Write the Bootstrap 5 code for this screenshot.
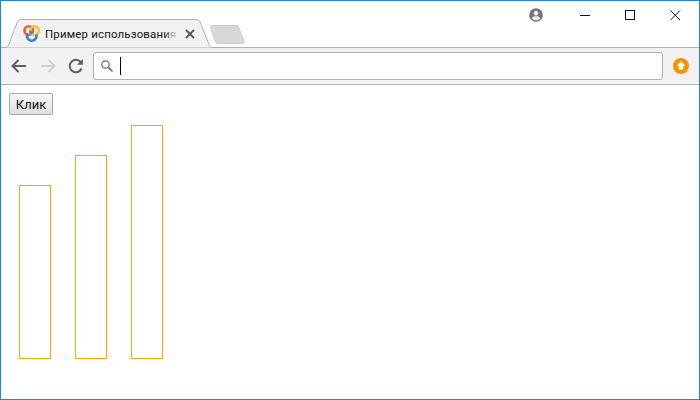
<!DOCTYPE html>
<html lang="ru">
<head>
<meta charset="utf-8">
<title>Пример использования</title>
<link href="https://cdn.jsdelivr.net/npm/bootstrap@5.3.0/dist/css/bootstrap.min.css" rel="stylesheet">
<style>
html, body { margin: 0; height: 100%; background: #fff; overflow: hidden; }
.win-frame { width: 700px; height: 400px; border: 1px solid #1e88dc; background: #fff; font-family: "Roboto", sans-serif; }
.tab-strip { height: 46px; position: relative; }
.tab-shape { position: absolute; left: 0; top: 0; }
.tab-title { position: absolute; left: 44px; top: 25px; font-family: "Roboto", sans-serif; font-size: 11.4px; letter-spacing: .2px; line-height: 16px; color: #111; white-space: nowrap; }
.tab-fade { position: absolute; left: 163px; top: 25px; width: 15px; height: 16px; background: linear-gradient(to right, rgba(242,242,242,0), #f2f2f2 95%); }
.tab-ico { position: absolute; }
.win-ctrl { position: absolute; }
.tool-strip { height: 38px; background: #f2f2f2; border-top: 1px solid #b0b0b0; border-bottom: 1px solid #b4b4b4; padding: 4px 0 0 8px; }
.tool-btn { width: 20px; height: 20px; display: block; flex: none; }
.nav-gap { margin-left: 1px; }
.addr-box { width: 570px; height: 28px; background: #fff; border: 1px solid #b0b0b0; border-radius: 3px; margin-left: 7px; flex: none; padding-left: 6px; }
.addr-caret { width: 1px; height: 18px; background: #000; margin-left: 6px; }
.up-badge { margin: 5px 0 0 9px; }
.page-zone { padding: 8px 0 0 8px; }
.click-btn { width: 44px; height: 22px; padding: 1px 0 0; border: 1px solid #a8a8a8; border-radius: 2px; background: linear-gradient(#f7f7f7, #e0e0e0); color: #111; font-family: "Roboto", sans-serif; font-weight: 400; font-size: 13px; line-height: 19px; display: block; }
.click-btn:hover { background: linear-gradient(#f7f7f7, #e0e0e0); color: #111; border-color: #a8a8a8; }
.bar-row { height: 244px; gap: 24px; padding-left: 10px; }
.bar-item { width: 32px; border: 1px solid #ffa800; background: #fff; }
</style>
</head>
<body>
<div class="win-frame d-flex flex-column">
  <div class="tab-strip">
    <svg class="tab-shape" width="260" height="48" viewBox="0 0 260 48" aria-hidden="true">
      <path d="M-1 46.5H4.500C6 46.500 7 45.500 7.600 44L16 22C16.800 19.500 18 18.500 20 18.500H195C197.500 18.500 198.500 19.500 199.500 22L208 43.500C208.800 45.500 209.500 46.500 212 46.500H260" fill="#f2f2f2" stroke="#b0b0b0" stroke-width="1"/>
      <path d="M209.500 26.500C209.200 25.200 210 24.500 211.500 24.500H235C236.300 24.500 237 25 237.500 26L243 40C243.800 41.500 243 42.500 241.500 42.500H217C215.800 42.500 215 42 214.500 41Z" fill="#d8d8d8" stroke="#cccccc" stroke-width="1"/>
    </svg>
    <svg class="tab-ico" style="left:22px;top:23px" width="18" height="18" viewBox="0 0 18 18" aria-hidden="true">
      <circle cx="5.800" cy="6.500" r="4.300" fill="none" stroke="#ee5a3a" stroke-width="2.600"/>
      <circle cx="11.500" cy="6.500" r="4.300" fill="none" stroke="#fbc02d" stroke-width="2.600"/>
      <path d="M4.300 10.500A4.700 4.700 0 1 0 13.200 10.500" fill="none" stroke="#1e88e5" stroke-width="2.600"/>
      <path d="M6.500 7.200L9.500 9.500" stroke="#1e88e5" stroke-width="2.400"/>
    </svg>
    <div class="tab-title">Пример использования</div>
    <div class="tab-fade"></div>
    <svg class="tab-ico" style="left:184px;top:28px" width="10" height="10" viewBox="0 0 10 10" aria-hidden="true">
      <path d="M1 1L9 9M9 1L1 9" stroke="#555" stroke-width="1.800"/>
    </svg>
    <svg class="win-ctrl" style="left:528px;top:7px" width="14" height="14" viewBox="0 0 14 14" aria-hidden="true">
      <circle cx="7" cy="7" r="6.800" fill="#757575"/>
      <circle cx="7" cy="5.200" r="2.300" fill="#fff"/>
      <path d="M2.800 10.600C3.500 8.900 5.200 8.300 7 8.300S10.500 8.900 11.200 10.600C10.200 11.800 8.700 12.300 7 12.300S3.800 11.800 2.800 10.600Z" fill="#fff"/>
    </svg>
    <svg class="win-ctrl" style="left:579px;top:14px" width="11" height="2" viewBox="0 0 11 2" aria-hidden="true"><path d="M0 .5H10" stroke="#111" stroke-width="1"/></svg>
    <svg class="win-ctrl" style="left:624px;top:9px" width="11" height="11" viewBox="0 0 11 11" aria-hidden="true"><rect x=".5" y=".5" width="9" height="9" fill="none" stroke="#111" stroke-width="1"/></svg>
    <svg class="win-ctrl" style="left:669px;top:9px" width="11" height="11" viewBox="0 0 11 11" aria-hidden="true"><path d="M.5 .5L10 10M10 .5L.5 10" stroke="#111" stroke-width="1"/></svg>
  </div>
  <div class="tool-strip d-flex align-items-start">
    <div class="d-flex align-items-center gap-2" style="height:28px">
      <svg class="tool-btn" viewBox="0 0 20 20" aria-hidden="true"><path d="M17 10H4M9.500 4L3.500 10L9.500 16" fill="none" stroke="#5f5f5f" stroke-width="2"/></svg>
      <svg class="tool-btn nav-gap" viewBox="0 0 20 20" aria-hidden="true"><path d="M3 10H16M10.500 4L16.500 10L10.500 16" fill="none" stroke="#d0d0d0" stroke-width="2"/></svg>
      <svg class="tool-btn" viewBox="0 0 20 20" aria-hidden="true"><path d="M15.600 12.500A6.200 6.200 0 1 1 15 6.400" fill="none" stroke="#5f5f5f" stroke-width="2"/><path d="M16.800 3V8.800H11Z" fill="#5f5f5f"/></svg>
    </div>
    <div class="addr-box d-flex align-items-center">
      <svg width="14" height="14" viewBox="0 0 14 14" aria-hidden="true"><circle cx="5.500" cy="5.500" r="3.700" fill="none" stroke="#666" stroke-width="1.200"/><path d="M8.300 8.300L12.500 12.500" stroke="#666" stroke-width="1.600"/></svg>
      <div class="addr-caret"></div>
    </div>
    <svg class="up-badge" width="18" height="18" viewBox="0 0 18 18" aria-hidden="true">
      <circle cx="9" cy="9" r="8" fill="#f39400"/>
      <path d="M9 4.300L13.300 8.800H11.200V12.600H6.800V8.800H4.700Z" fill="#fff"/>
    </svg>
  </div>
  <div class="page-zone flex-grow-1">
    <button type="button" class="btn click-btn">Клик</button>
    <div class="bar-row d-flex align-items-end">
      <div class="bar-item" style="height:174px"></div>
      <div class="bar-item" style="height:204px"></div>
      <div class="bar-item" style="height:234px"></div>
    </div>
  </div>
</div>
</body>
</html>
